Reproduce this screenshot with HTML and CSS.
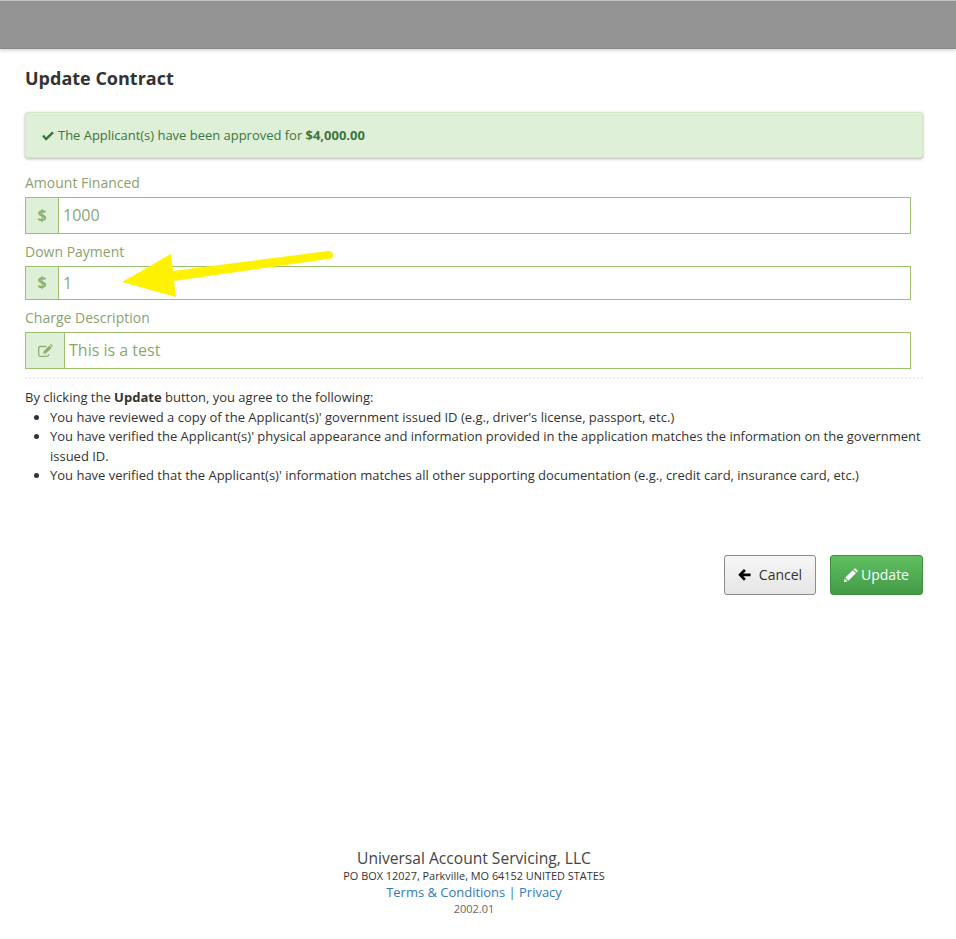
FILE: index.html
```html
<!DOCTYPE html>
<html lang="en">
<head>
<meta charset="utf-8">
<title>Update Contract</title>
<link rel="stylesheet" href="styles.css">
</head>
<body>
<header class="topbar"></header>
<main class="page">
  <h1 class="title">Update Contract</h1>
  <div class="alert">
    <svg class="alert-check" viewBox="0 0 14 12"><path d="M2 4.6 L0 6.7 L4.7 11.6 L14 2.6 L12 .6 L4.7 7.6 Z" fill="currentColor"/></svg>
    <span>The Applicant(s) have been approved for <strong>$4,000.00</strong></span>
  </div>
  <form class="form">
    <label class="label">Amount Financed</label>
    <div class="group group-a">
      <span class="addon addon-dollar">$</span>
      <div class="value">1000</div>
    </div>
    <label class="label label-b">Down Payment</label>
    <div class="group group-b">
      <span class="addon addon-dollar">$</span>
      <div class="value">1</div>
    </div>
    <label class="label label-c">Charge Description</label>
    <div class="group group-c">
      <span class="addon addon-edit">
        <svg class="edit-icon" viewBox="0 0 15 13"><path d="M10.5 10.2 V10.8 A1.5 1.5 0 0 1 9 12.3 H2.2 A1.5 1.5 0 0 1 .7 10.8 V4 A1.5 1.5 0 0 1 2.2 2.5 H8.2" fill="none" stroke="currentColor" stroke-width="1.3"/><path d="M5.2 9.8 L5.6 7.2 L11.4 1.4 L13.7 3.7 L7.9 9.5 Z M12 .8 L12.9 0 L15 2.1 L14.2 3 Z" fill="currentColor"/></svg>
      </span>
      <div class="value">This is a test</div>
    </div>
  </form>
  <hr class="rule">
  <p class="intro">By clicking the <strong>Update</strong> button, you agree to the following:</p>
  <ul class="terms">
    <li>You have reviewed a copy of the Applicant(s)' government issued ID (e.g., driver's license, passport, etc.)</li>
    <li>You have verified the Applicant(s)' physical appearance and information provided in the application matches the information on the government issued ID.</li>
    <li>You have verified that the Applicant(s)' information matches all other supporting documentation (e.g., credit card, insurance card, etc.)</li>
  </ul>
  <div class="actions">
    <button type="button" class="btn btn-cancel">
      <svg class="btn-icon" viewBox="0 0 14 13"><path d="M6.4 0 L8.5 2.1 L5.6 4.8 H13.6 V7.8 H5.6 L8.5 10.6 L6.4 12.7 L.2 6.3 Z" fill="currentColor"/></svg>
      <span class="cancel-text">Cancel</span>
    </button>
    <button type="button" class="btn btn-update">
      <svg class="btn-icon pencil" viewBox="0 0 14 14"><path d="M0 14 L.6 10.4 L3.6 13.4 Z M1.3 9.6 L8.7 2.2 L11.8 5.3 L4.4 12.7 Z M9.5 1.4 L10.5 .4 Q11 0 11.5 .4 L13.6 2.5 Q14 3 13.6 3.5 L12.6 4.5 Z" fill="currentColor"/></svg>
      <span>Update</span>
    </button>
  </div>
</main>
<footer class="footer">
  <div class="company">Universal Account Servicing, LLC</div>
  <div class="address">PO BOX 12027, Parkville, MO 64152 UNITED STATES</div>
  <div class="links"><a href="#">Terms &amp; Conditions</a> | <a href="#">Privacy</a></div>
  <div class="version">2002.01</div>
</footer>
<svg class="arrow" viewBox="0 0 956 939" aria-hidden="true"><path d="M122 282 L171 254 L173 271 L328 251 Q333 251 333 255 Q333 259 328 259 L174 281 L176 297 Z" fill="#fff200"/></svg>
</body>
</html>
```
FILE: styles.css
```css
* { box-sizing: border-box; }
html, body { margin: 0; padding: 0; }
body {
  position: relative;
  min-height: 939px;
  display: flex;
  flex-direction: column;
  background: #fff;
  color: #333;
  font-family: "Open Sans", "Liberation Sans", sans-serif;
  font-size: 13px;
  line-height: 19.5px;
}
.topbar {
  height: 49px;
  background: #949494;
  border-top: 1px solid #c4c4c4;
  border-bottom: 1px solid #888;
  box-shadow: 0 2px 3px rgba(0,0,0,.15);
}
.page { padding: 0 33px 0 25px; }
.title {
  margin: 17px 0 0;
  font-size: 18px;
  line-height: 24px;
  font-weight: 700;
  color: #333;
}
.alert {
  display: flex;
  align-items: center;
  gap: 4px;
  height: 46px;
  margin-top: 22px;
  padding: 1px 16px 0;
  background: #dff0d8;
  border: 1px solid #d6e9c6;
  border-radius: 3px;
  box-shadow: 0 1px 3px rgba(0,0,0,.3);
  color: #3c763d;
  letter-spacing: -.02px;
}
.alert-check { width: 12px; height: 10px; }
.form { margin-top: 15px; padding-right: 12px; }
.label {
  display: block;
  height: 24px;
  font-size: 14px;
  line-height: 20px;
  color: #8aa26f;
}
.label-b { margin-top: 8px; }
.label-c { height: 25px; margin-top: 7px; padding-top: 1px; }
.group {
  display: flex;
  border: 1px solid #9cc070;
  background: #fff;
}
.group-a { height: 37px; }
.group-b { height: 34px; }
.group-b .value { padding-top: 1px; }
.group-c { height: 37px; }
.addon {
  display: flex;
  align-items: center;
  justify-content: center;
  background: #dff0d8;
  border-right: 1px solid #9cc070;
  color: #8fb068;
}
.addon-dollar { width: 33px; font-size: 16px; font-weight: 700; }
.addon-edit { width: 39px; }
.edit-icon { width: 15px; height: 13px; }
.value {
  display: flex;
  align-items: center;
  padding-left: 4px;
  font-size: 16px;
  color: #8aa870;
}
.rule {
  height: 0;
  margin: 8px 0 0;
  border: 0;
  border-top: 2px dotted #eee;
}
.intro { margin: 9px 0 0; }
.terms { margin: 0; padding-left: 25px; letter-spacing: -.007px; }
.actions {
  display: flex;
  justify-content: flex-end;
  gap: 14px;
  margin-top: 69px;
}
.btn {
  display: flex;
  align-items: center;
  height: 40px;
  padding: 0;
  border-radius: 3px;
  font-family: inherit;
  font-size: 14px;
}
.btn-cancel {
  width: 92px;
  justify-content: center;
  gap: 8px;
  border: 1px solid #8c8c8c;
  background: linear-gradient(#f6f6f6, #e6e6e6);
  color: #333;
}
.btn-cancel .btn-icon { color: #000; }
.btn-update {
  width: 93px;
  justify-content: center;
  gap: 3px;
  border: 1px solid #3e8f3e;
  background: linear-gradient(#5fc060, #449a48);
  color: #fff;
}
.btn-icon { width: 13px; height: 12px; }
.pencil { width: 14px; height: 14px; }
.footer {
  margin-top: 253px;
  text-align: center;
  padding-right: 8px;
}
.company { font-size: 15.6px; line-height: 20px; color: #444; }
.address { font-size: 10.9px; line-height: 15px; color: #333; }
.links { font-size: 13px; line-height: 19px; color: #337ab7; letter-spacing: -.02px; }
.links a { color: #337ab7; text-decoration: none; }
.version { font-size: 11px; line-height: 14px; color: #666; }
.arrow {
  position: absolute;
  top: 0;
  left: 0;
  width: 956px;
  height: 939px;
  pointer-events: none;
}
```
